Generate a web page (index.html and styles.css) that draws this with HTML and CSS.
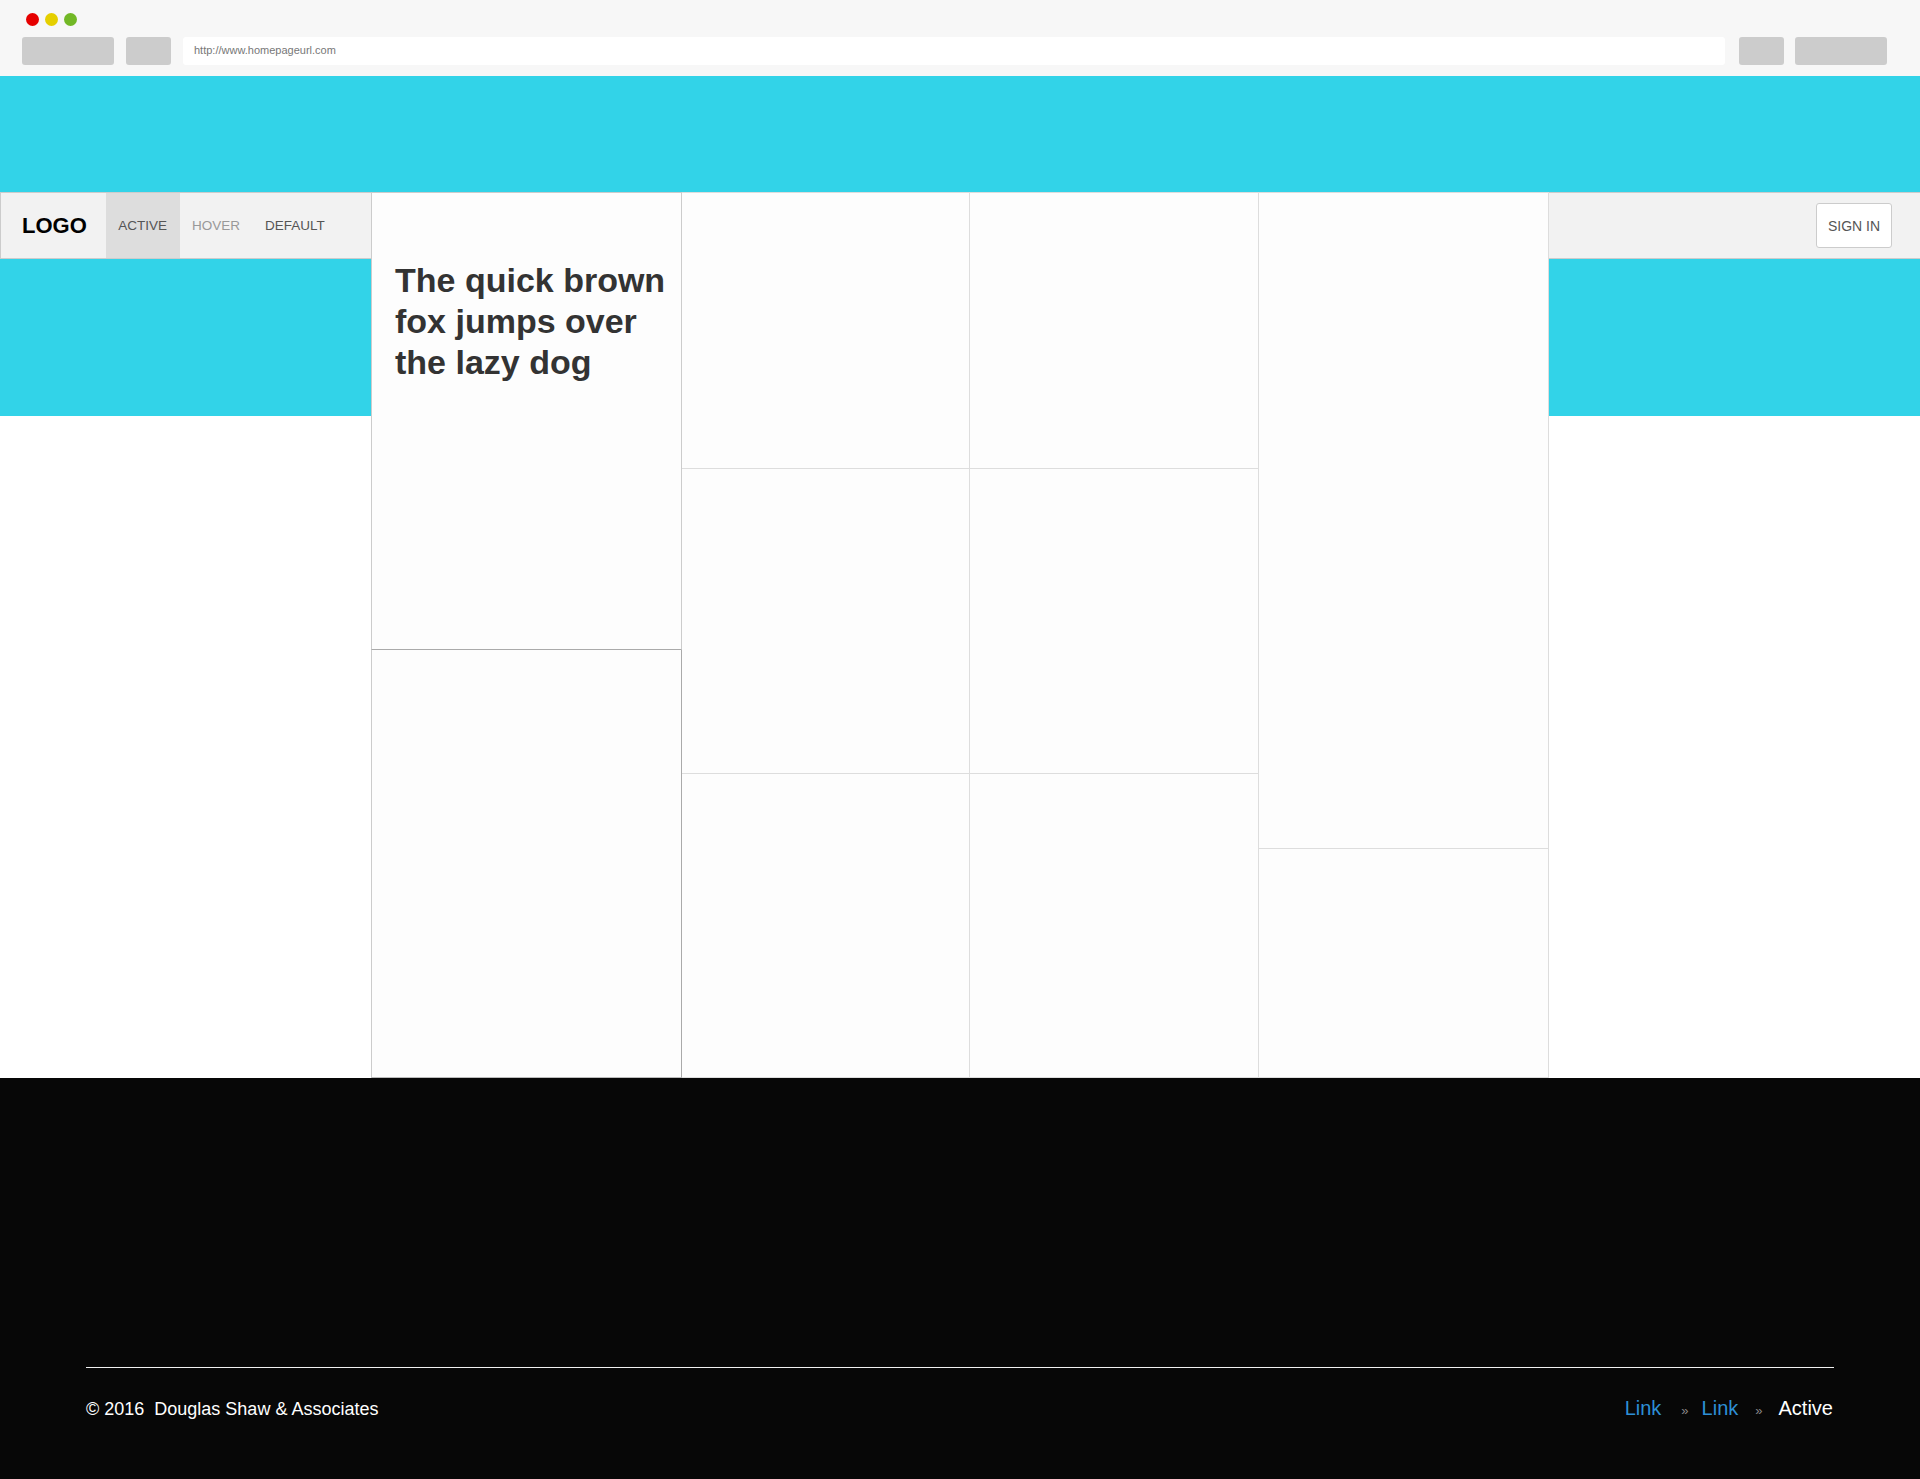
FILE: index.html
```html
<!DOCTYPE html>
<html lang="en">
<head>
<meta charset="utf-8">
<title>Wireframe</title>
<link rel="stylesheet" href="styles.css">
</head>
<body>
<div class="chrome">
  <div class="dots">
    <span class="dot dot-red"></span>
    <span class="dot dot-yellow"></span>
    <span class="dot dot-green"></span>
  </div>
  <div class="toolbar">
    <span class="tbtn tbtn-wide"></span>
    <span class="tbtn tbtn-narrow tbtn-gap"></span>
    <div class="url">http://www.homepageurl.com</div>
    <span class="tbtn tbtn-narrow tbtn-gap3"></span>
    <span class="tbtn tbtn-wide tbtn-gap4"></span>
  </div>
</div>

<main class="main">
  <div class="side side-left">
    <nav class="nav nav-left">
      <span class="logo">LOGO</span>
      <a class="nav-item nav-active">ACTIVE</a>
      <a class="nav-item nav-hover">HOVER</a>
      <a class="nav-item">DEFAULT</a>
    </nav>
  </div>

  <div class="grid">
    <div class="col col-1">
      <div class="card card-c1a">
        <h1 class="headline">The quick brown fox jumps over the lazy dog</h1>
      </div>
      <div class="card card-c1b"></div>
    </div>
    <div class="col col-2">
      <div class="card card-r1"></div>
      <div class="card card-r2"></div>
      <div class="card card-r3"></div>
    </div>
    <div class="col col-3">
      <div class="card card-r1"></div>
      <div class="card card-r2"></div>
      <div class="card card-r3"></div>
    </div>
    <div class="col col-4">
      <div class="card card-c4a"></div>
      <div class="card card-c4b"></div>
    </div>
  </div>

  <div class="side side-right">
    <nav class="nav nav-right">
      <button class="signin">SIGN IN</button>
    </nav>
  </div>
</main>

<footer class="footer">
  <div class="footer-inner">
    <div class="copyright">©&nbsp;2016&nbsp; Douglas Shaw &amp; Associates</div>
    <div class="crumbs">
      <a class="crumb-link crumb-first">Link</a>
      <span class="crumb-sep">»</span>
      <a class="crumb-link">Link</a>
      <span class="crumb-sep">»</span>
      <span class="crumb-active">Active</span>
    </div>
  </div>
</footer>
</body>
</html>
```

FILE: styles.css
```css
* { box-sizing: border-box; }

html, body {
  margin: 0;
  padding: 0;
}

body {
  font-family: "Liberation Sans", Arial, Helvetica, sans-serif;
  background: #fff;
  width: 1920px;
}

/* Browser chrome */
.chrome {
  height: 76px;
  background: #f7f7f7;
  padding-top: 13px;
}

.dots {
  display: flex;
  gap: 6px;
  padding-left: 26px;
  height: 13px;
}

.dot {
  width: 13px;
  height: 13px;
  border-radius: 50%;
  display: block;
}
.dot-red { background: #e60000; }
.dot-yellow { background: #e5cf00; }
.dot-green { background: #72b826; }

.toolbar {
  display: flex;
  margin-top: 11px;
  padding-left: 22px;
  padding-right: 33px;
  height: 28px;
}

.tbtn {
  display: block;
  height: 28px;
  background: #cccccc;
  border-radius: 3px;
}
.tbtn-wide { width: 92px; }
.tbtn-narrow { width: 45px; }
.tbtn-gap { margin-left: 12px; }
.tbtn-gap3 { margin-left: 14px; }
.tbtn-gap4 { margin-left: 11px; }

.url {
  flex: 1;
  margin-left: 12px;
  background: #fff;
  border-radius: 3px;
  font-size: 11px;
  color: #777;
  line-height: 27px;
  padding-left: 11px;
}

/* Main area */
.main {
  display: flex;
  height: 1002px;
  background: linear-gradient(to bottom, #32d3e8 0, #32d3e8 340px, #ffffff 340px);
}

.side {
  width: 371px;
  padding-top: 116px;
}

.nav {
  height: 67px;
  background: #f2f2f2;
  border-top: 1px solid #cccccc;
  border-bottom: 1px solid #cccccc;
  display: flex;
  align-items: stretch;
}

.nav-left {
  border-left: 1px solid #cccccc;
}

.logo {
  display: flex;
  align-items: center;
  padding-left: 21px;
  margin-right: 19px;
  font-size: 22px;
  font-weight: bold;
  color: #000;
}

.nav-item {
  display: flex;
  align-items: center;
  padding: 0 12.5px;
  font-size: 13.5px;
  color: #555;
}

.nav-active { background: #dddddd; }
.nav-hover { color: #999; }

.nav-right {
  justify-content: flex-end;
  align-items: center;
  padding-right: 28px;
}

.signin {
  height: 45px;
  width: 76px;
  padding: 0;
  background: #fff;
  border: 1px solid #cccccc;
  border-radius: 3px;
  font-family: "Liberation Sans", Arial, Helvetica, sans-serif;
  font-size: 14px;
  color: #555;
}

/* Grid of cards */
.grid {
  width: 1178px;
  margin-top: 116px;
  height: 886px;
  display: grid;
  grid-template-columns: 311px 288px 289px 290px;
}

.col {
  display: flex;
  flex-direction: column;
}

.card {
  background: #fdfdfd;
  border-right: 1px solid #dddddd;
  border-bottom: 1px solid #dddddd;
}

.col .card:first-child {
  border-top: 1px solid #dddddd;
}

.card-c1a {
  height: 458px;
  border-left: 1px solid #cccccc;
  border-right: 1px solid #cccccc;
  border-bottom: 1px solid #aaaaaa;
  padding: 67px 12px 0 23px;
}
.col .card-c1a:first-child { border-top: 1px solid #cccccc; }

.card-c1b {
  height: 428px;
  border-left: 1px solid #cccccc;
  border-right: 1px solid #aaaaaa;
  border-bottom: 1px solid #bbbbbb;
}

.card-r1 { height: 277px; }
.card-r2 { height: 305px; }
.card-r3 { height: 304px; }

.card-c4a { height: 657px; }
.card-c4b { height: 229px; }

.headline {
  margin: 0;
  font-size: 34px;
  line-height: 41px;
  font-weight: bold;
  color: #333333;
}

/* Footer */
.footer {
  height: 401px;
  background: #070707;
  padding: 289px 86px 0;
}

.footer-inner {
  border-top: 1px solid #f0f0f0;
  padding-top: 28px;
  display: flex;
  justify-content: space-between;
  align-items: baseline;
  line-height: 24px;
}

.copyright {
  font-size: 18px;
  color: #fff;
}

.crumbs {
  display: flex;
  align-items: baseline;
  font-size: 20px;
}

.crumb-link {
  color: #2d8fd5;
  padding-right: 5px;
}

.crumb-first {
  padding-right: 8px;
}

.crumb-sep {
  font-size: 13px;
  color: #888;
  margin: 0 13px 0 12px;
}

.crumb-active {
  color: #fff;
  padding-left: 3px;
  margin-right: 1px;
}
```
